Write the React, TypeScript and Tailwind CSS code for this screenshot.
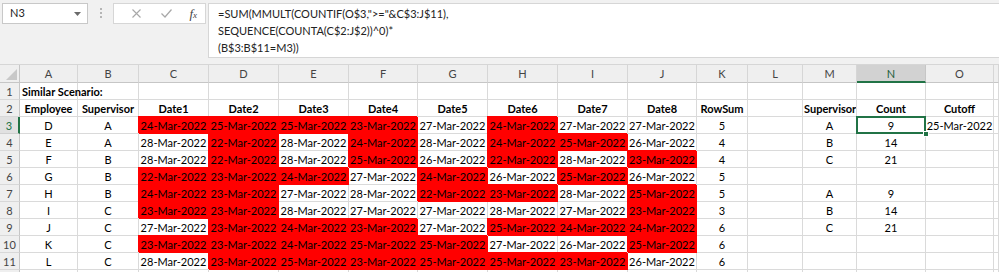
import React from "react";

type Row = {
  e: string;
  s: string;
  d: string[];
  sum: number;
  m?: string;
  n?: string;
  o?: string;
};

const rows: Row[] = [
  { e: "D", s: "A", d: ["24r", "25r", "25r", "23r", "27", "24r", "27", "27"], sum: 5, m: "A", n: "9", o: "25-Mar-2022" },
  { e: "E", s: "A", d: ["28", "22r", "28", "24r", "28", "24r", "25r", "26"], sum: 4, m: "B", n: "14" },
  { e: "F", s: "B", d: ["28", "22r", "28", "25r", "26", "22r", "28", "23r"], sum: 4, m: "C", n: "21" },
  { e: "G", s: "B", d: ["22r", "23r", "24r", "27", "24r", "26", "25r", "26"], sum: 5 },
  { e: "H", s: "B", d: ["24r", "23r", "27", "28", "22r", "23r", "28", "25r"], sum: 5, m: "A", n: "9" },
  { e: "I", s: "C", d: ["23r", "23r", "28", "27", "27", "28", "27", "23r"], sum: 3, m: "B", n: "14" },
  { e: "J", s: "C", d: ["27", "23r", "24r", "23r", "27", "25r", "24r", "24r"], sum: 6, m: "C", n: "21" },
  { e: "K", s: "C", d: ["23r", "23r", "24r", "25r", "25r", "27", "26", "25r"], sum: 6 },
  { e: "L", s: "C", d: ["28", "23r", "25r", "23r", "25r", "25r", "23r", "26"], sum: 6 },
];

const letters = ["A", "B", "C", "D", "E", "F", "G", "H", "I", "J", "K", "L", "M", "N", "O", ""];

const base =
  "h-[17px] border-r border-b border-[#dadada] flex items-center justify-center whitespace-nowrap overflow-hidden text-[11px] leading-none text-black";

const bold = "font-bold text-[11.5px]";

function Cell({ children, cls = "" }: { children?: React.ReactNode; cls?: string }) {
  return <div className={`${base} ${cls}`}>{children}</div>;
}

function DateCell({ v }: { v: string }) {
  const red = v.endsWith("r");
  const day = v.replace("r", "");
  return (
    <div
      className={
        red
          ? `${base} bg-[#ff0000] border-[#ff0000] relative shadow-[-1px_-1px_0_#ff0000] text-[#1a0000]`
          : `${base} bg-white`
      }
    >
      {day}-Mar-2022
    </div>
  );
}

function RowHead({ n, active = false }: { n?: number | string; active?: boolean }) {
  return (
    <div
      className={
        active
          ? "h-[17px] border-b border-[#d0d0d0] border-r-2 border-r-[#217346] bg-[#e1e1e1] flex items-center justify-center text-[11px] leading-none text-[#217346]"
          : "h-[17px] border-b border-[#d8d8d8] border-r border-r-[#c6c6c6] bg-[#efefef] flex items-center justify-center text-[11px] leading-none text-[#444]"
      }
    >
      {n}
    </div>
  );
}

export default function App() {
  return (
    <div className="w-[999px] h-[272px] overflow-hidden bg-[#f1f1f1] [font-family:Lato,'Open_Sans',sans-serif]">
      {/* Formula bar */}
      <div className="h-[64px] flex items-start">
        <div className="ml-[2px] mt-[3px] w-[86px] h-[21px] bg-white border border-[#c8c8c8] flex items-center justify-between pl-[7px] pr-[6px]">
          <span className="text-[11px] text-[#222]">N3</span>
          <svg width="7" height="4" viewBox="0 0 7 4">
            <path d="M0 0 L7 0 L3.5 4 Z" fill="#6b6b6b" />
          </svg>
        </div>
        <div className="w-[25px] h-[24px] flex flex-col items-center justify-center gap-[2px] pt-[2px]">
          <div className="w-[2px] h-[2px] bg-[#b5b5b5]" />
          <div className="w-[2px] h-[2px] bg-[#b5b5b5]" />
          <div className="w-[2px] h-[2px] bg-[#b5b5b5]" />
        </div>
        <div className="mt-[3px] w-[93px] h-[21px] bg-white border border-[#d6d6d6] flex items-center">
          <div className="w-[31px] flex justify-end pr-[4px]">
            <svg width="9" height="9" viewBox="0 0 9 9">
              <path d="M0.5 0.5 L8.5 8.5 M8.5 0.5 L0.5 8.5" stroke="#a8a8a8" strokeWidth="1.1" />
            </svg>
          </div>
          <div className="w-[30px] flex justify-end pr-[3px]">
            <svg width="11" height="9" viewBox="0 0 11 9">
              <path d="M0.5 4.5 L4 8 L10.5 0.5" stroke="#a8a8a8" strokeWidth="1.2" fill="none" />
            </svg>
          </div>
          <div className="flex-1 flex justify-end pr-[8px] items-end">
            <span className="[font-family:'Liberation_Serif',serif] italic text-[13px] leading-none text-[#444]">f</span>
            <span className="[font-family:'Liberation_Serif',serif] italic text-[9px] leading-none text-[#444]">x</span>
          </div>
        </div>
        <div className="ml-[2px] mt-[3px] flex-1 h-[55px] bg-white border border-r-0 border-[#d6d6d6] pl-[9px] pt-[1px] text-[11px] leading-[17px] text-[#222] whitespace-pre">
          <div>{'=SUM(MMULT(COUNTIF(O$3,">="&C$3:J$11),'}</div>
          <div>{"SEQUENCE(COUNTA(C$2:J$2))^0)*"}</div>
          <div>{"(B$3:B$11=M3))"}</div>
        </div>
      </div>

      {/* Grid */}
      <div className="grid grid-cols-[20px_58px_61px_70px_70px_70px_69px_70px_70px_70px_69px_51px_55px_54px_69px_68px_1fr] bg-white border-t border-[#d6d6d6]">
        {/* header row */}
        <div className="h-[18px] bg-[#efefef] border-r border-b border-[#c6c6c6] flex items-end justify-end p-[2px]">
          <svg width="11" height="11" viewBox="0 0 11 11">
            <path d="M11 0 L11 11 L0 11 Z" fill="#c8c8c8" />
          </svg>
        </div>
        {letters.map((l, i) =>
          l === "N" ? (
            <div
              key={i}
              className="h-[18px] bg-[#d2d2d2] border-r border-[#c6c6c6] border-b-2 border-b-[#217346] flex items-center justify-center text-[11px] leading-none text-[#1d5e3a]"
            >
              {l}
            </div>
          ) : (
            <div
              key={i}
              className="h-[18px] bg-[#efefef] border-r border-[#d6d6d6] border-b border-b-[#c6c6c6] flex items-center justify-center text-[11px] leading-none text-[#444]"
            >
              {l}
            </div>
          )
        )}

        {/* row 1 */}
        <RowHead n={1} />
        <div className={`${base} ${bold} justify-start pl-[2px] overflow-visible relative z-10`}>Similar Scenario:</div>
        {Array.from({ length: 15 }).map((_, i) => (
          <Cell key={i} />
        ))}

        {/* row 2 */}
        <RowHead n={2} />
        <Cell cls={bold}>Employee</Cell>
        <Cell cls={bold}>Supervisor</Cell>
        {[1, 2, 3, 4, 5, 6, 7, 8].map((k) => (
          <Cell key={k} cls={bold}>
            Date{k}
          </Cell>
        ))}
        <Cell cls={bold}>RowSum</Cell>
        <Cell />
        <Cell cls={`${bold} justify-start pl-px`}>Supervisor</Cell>
        <Cell cls={bold}>Count</Cell>
        <Cell cls={bold}>Cutoff</Cell>
        <Cell />

        {/* data rows */}
        {rows.map((r, ri) => (
          <React.Fragment key={ri}>
            <RowHead n={ri + 3} active={ri === 0} />
            <Cell>{r.e}</Cell>
            <Cell>{r.s}</Cell>
            {r.d.map((v, di) => (
              <DateCell key={di} v={v} />
            ))}
            <Cell>{r.sum}</Cell>
            <Cell />
            <Cell>{r.m}</Cell>
            {ri === 0 ? (
              <div className={`${base} relative overflow-visible`}>
                {r.n}
                <div className="absolute left-[-1px] top-[-1px] right-[-1px] bottom-[-1px] border-2 border-[#217346] z-20" />
                <div className="absolute right-[-4px] bottom-[-4px] w-[6px] h-[6px] bg-[#217346] border border-white z-30" />
              </div>
            ) : (
              <Cell>{r.n}</Cell>
            )}
            <Cell>{r.o}</Cell>
            <Cell />
          </React.Fragment>
        ))}

        {/* row 12 (only its top edge is in view) */}
        <RowHead />
        {Array.from({ length: 16 }).map((_, i) => (
          <Cell key={i} />
        ))}
      </div>
    </div>
  );
}
